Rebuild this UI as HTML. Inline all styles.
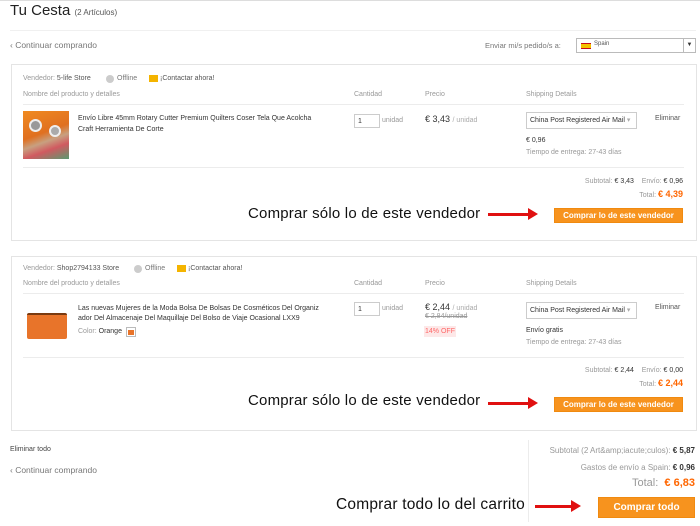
<!DOCTYPE html>
<html><head><meta charset="utf-8"><style>
*{margin:0;padding:0;box-sizing:border-box}
body{width:700px;height:526px;background:#fff;position:relative;overflow:hidden;font-family:"Liberation Sans",sans-serif;color:#333}
.a{position:absolute;white-space:nowrap}
.s{font-size:7px;color:#999}
.t{font-size:7px;color:#333}
.box{position:absolute;border:1px solid #e4e4e4;background:#fff}
.hl{position:absolute;height:1px;background:#ececec}
.btn{position:absolute;background:#f7931e;color:#fff;font-size:8px;font-weight:bold;text-align:center;border:1px solid #f08a10}
.big{position:absolute;font-size:15px;color:#111;white-space:nowrap;letter-spacing:0.2px}
.sel{position:absolute;border:1px solid #ccc;background:#fff;font-size:7px;padding:3px 3px;color:#333}
.arrow{position:absolute;height:3px;background:#e01010}
.arrow:after{content:"";position:absolute;right:-8px;top:-5px;border-left:10px solid #e01010;border-top:6.5px solid transparent;border-bottom:6.5px solid transparent}
</style></head><body>
<div class="hl" style="left:0;top:0;width:700px;background:#ddd"></div>
<div class="a" style="left:10px;top:2px;font-size:15px;color:#222">Tu Cesta <span style="font-size:8px;color:#555">(2 Artículos)</span></div>
<div class="hl" style="left:10px;top:30px;width:686px;background:#f0f0f0"></div>
<div class="a" style="left:10px;top:40px;font-size:8.5px;color:#777">‹ Continuar comprando</div>
<div class="a" style="left:485px;top:41px;font-size:7.5px;color:#777">Enviar mi/s pedido/s a:</div>
<div class="a" style="left:576px;top:38px;width:120px;height:15px;border:1px solid #bbb"><div class="a" style="left:4px;top:4px;width:10px;height:6px;background:#f4c200;border-top:1.5px solid #c60b1e;border-bottom:1.5px solid #c60b1e"></div><div class="a" style="left:17px;top:2px;font-size:6px;color:#555">Spain</div><div class="a" style="right:0;top:0;width:12px;height:13px;border-left:1px solid #bbb;font-size:6px;text-align:center;line-height:13px">▼</div></div>

<!-- Box 1 -->
<div class="box" style="left:11px;top:64px;width:686px;height:177px"></div>
<div class="a s" style="left:23px;top:75px">Vendedor: <span style="color:#555">5-life Store</span></div>
<div class="a" style="left:106px;top:75px;width:8px;height:8px;border-radius:50%;background:#ccc"></div>
<div class="a s" style="left:117px;top:75px;color:#777">Offline</div>
<div class="a" style="left:149px;top:75px;width:9px;height:7px;background:#f4b400"></div>
<div class="a s" style="left:160px;top:75px;color:#555">¡Contactar ahora!</div>
<div class="a s" style="left:23px;top:91px">Nombre del producto y detalles</div>
<div class="a s" style="left:354px;top:91px">Cantidad</div>
<div class="a s" style="left:425px;top:91px">Precio</div>
<div class="a s" style="left:526px;top:91px">Shipping Details</div>
<div class="hl" style="left:23px;top:104px;width:661px"></div>
<div class="a" style="left:23px;top:111px;width:46px;height:48px;background:linear-gradient(160deg,#f08a20 0%,#e07020 45%,#c8a080 60%,#d05a60 75%,#5a9a70 100%)"><div class="a" style="left:6px;top:8px;width:13px;height:13px;border-radius:50%;background:#999;border:2px solid #eee"></div><div class="a" style="left:26px;top:14px;width:12px;height:12px;border-radius:50%;background:#aaa;border:2px solid #eee"></div></div>
<div class="a t" style="left:78px;top:113px;line-height:11px">Envío Libre 45mm Rotary Cutter Premium Quilters Coser Tela Que Acolcha<br>Craft Herramienta De Corte</div>
<div class="a" style="left:354px;top:114px;width:26px;height:14px;border:1px solid #ccc;font-size:7px;padding:3px 3px">1</div>
<div class="a s" style="left:382px;top:117px">unidad</div>
<div class="a" style="left:425px;top:114px;font-size:9px">€ 3,43 <span style="font-size:7px;color:#aaa">/ unidad</span></div>
<div class="sel" style="left:526px;top:112px;width:111px;height:17px">China Post Registered Air Mail <span style="color:#aaa">▾</span></div>
<div class="a t" style="left:655px;top:115px;color:#555">Eliminar</div>
<div class="a t" style="left:526px;top:137px">€ 0,96</div>
<div class="a s" style="left:526px;top:149px">Tiempo de entrega: 27-43 días</div>
<div class="hl" style="left:23px;top:167px;width:661px"></div>
<div class="a s" style="right:17px;top:178px">Subtotal: <span style="color:#333">€ 3,43</span> &nbsp;&nbsp; Envío: <span style="color:#333">€ 0,96</span></div>
<div class="a s" style="right:17px;top:189px">Total: <span style="color:#f60;font-size:9px;font-weight:bold">€ 4,39</span></div>
<div class="big" style="left:248px;top:205px">Comprar sólo lo de este vendedor</div>
<div class="arrow" style="left:488px;top:213px;width:42px"></div>
<div class="btn" style="left:554px;top:208px;width:129px;height:15px;line-height:13px">Comprar lo de este vendedor</div>

<!-- Box 2 -->
<div class="box" style="left:11px;top:256px;width:686px;height:175px"></div>
<div class="a s" style="left:23px;top:265px">Vendedor: <span style="color:#555">Shop2794133 Store</span></div>
<div class="a" style="left:134px;top:265px;width:8px;height:8px;border-radius:50%;background:#ccc"></div>
<div class="a s" style="left:145px;top:265px;color:#777">Offline</div>
<div class="a" style="left:177px;top:265px;width:9px;height:7px;background:#f4b400"></div>
<div class="a s" style="left:188px;top:265px;color:#555">¡Contactar ahora!</div>
<div class="a s" style="left:23px;top:280px">Nombre del producto y detalles</div>
<div class="a s" style="left:354px;top:280px">Cantidad</div>
<div class="a s" style="left:425px;top:280px">Precio</div>
<div class="a s" style="left:526px;top:280px">Shipping Details</div>
<div class="hl" style="left:23px;top:293px;width:661px"></div>
<div class="a" style="left:27px;top:313px;width:40px;height:26px;background:#e8742a;border-radius:2px;border-top:2px solid #7a3a10"></div>
<div class="a t" style="left:78px;top:304px;line-height:10px">Las nuevas Mujeres de la Moda Bolsa De Bolsas De Cosméticos Del Organiz<br>ador Del Almacenaje Del Maquillaje Del Bolso de Viaje Ocasional LXX9</div>
<div class="a s" style="left:78px;top:328px">Color: <span style="color:#333">Orange</span></div>
<div class="a" style="left:126px;top:327px;width:10px;height:10px;border:1px solid #bbb;background:#fff"><div class="a" style="left:1px;top:2px;width:6px;height:5px;background:#e8742a"></div></div>
<div class="a" style="left:354px;top:302px;width:26px;height:14px;border:1px solid #ccc;font-size:7px;padding:3px 3px">1</div>
<div class="a s" style="left:382px;top:305px">unidad</div>
<div class="a" style="left:425px;top:302px;font-size:9px">€ 2,44 <span style="font-size:7px;color:#aaa">/ unidad</span></div>
<div class="a s" style="left:425px;top:313px;text-decoration:line-through">€ 2,84/unidad</div>
<div class="a" style="left:424px;top:326px;width:32px;height:11px;background:#fde8e8;color:#f66;font-size:7px;text-align:center;line-height:11px">14% OFF</div>
<div class="sel" style="left:526px;top:302px;width:111px;height:17px">China Post Registered Air Mail <span style="color:#aaa">▾</span></div>
<div class="a t" style="left:655px;top:304px;color:#555">Eliminar</div>
<div class="a t" style="left:526px;top:327px">Envío gratis</div>
<div class="a s" style="left:526px;top:339px">Tiempo de entrega: 27-43 días</div>
<div class="hl" style="left:23px;top:357px;width:661px"></div>
<div class="a s" style="right:17px;top:367px">Subtotal: <span style="color:#333">€ 2,44</span> &nbsp;&nbsp; Envío: <span style="color:#333">€ 0,00</span></div>
<div class="a s" style="right:17px;top:378px">Total: <span style="color:#f60;font-size:9px;font-weight:bold">€ 2,44</span></div>
<div class="big" style="left:248px;top:392px">Comprar sólo lo de este vendedor</div>
<div class="arrow" style="left:488px;top:402px;width:42px"></div>
<div class="btn" style="left:554px;top:397px;width:129px;height:15px;line-height:13px">Comprar lo de este vendedor</div>

<!-- Bottom -->
<div class="a t" style="left:10px;top:446px;color:#444">Eliminar todo</div>
<div class="a" style="left:10px;top:465px;font-size:8.5px;color:#777">‹ Continuar comprando</div>
<div style="position:absolute;left:528px;top:440px;width:1px;height:82px;background:#ececec"></div>
<div class="a" style="right:5px;top:446px;font-size:8px;color:#999">Subtotal (2 Art&amp;amp;iacute;culos): <span style="color:#333;font-weight:bold">€ 5,87</span></div>
<div class="a" style="right:5px;top:463px;font-size:8px;color:#999">Gastos de envío a Spain: <span style="color:#333;font-weight:bold">€ 0,96</span></div>
<div class="a" style="right:5px;top:477px;font-size:11px;color:#999">Total: &nbsp;<span style="color:#f60;font-weight:bold">€ 6,83</span></div>
<div class="big" style="left:336px;top:496px;font-size:15.5px">Comprar todo lo del carrito</div>
<div class="arrow" style="left:535px;top:505px;width:38px"></div>
<div class="btn" style="left:598px;top:497px;width:97px;height:21px;line-height:19px;font-size:10px">Comprar todo</div>
</body></html>
